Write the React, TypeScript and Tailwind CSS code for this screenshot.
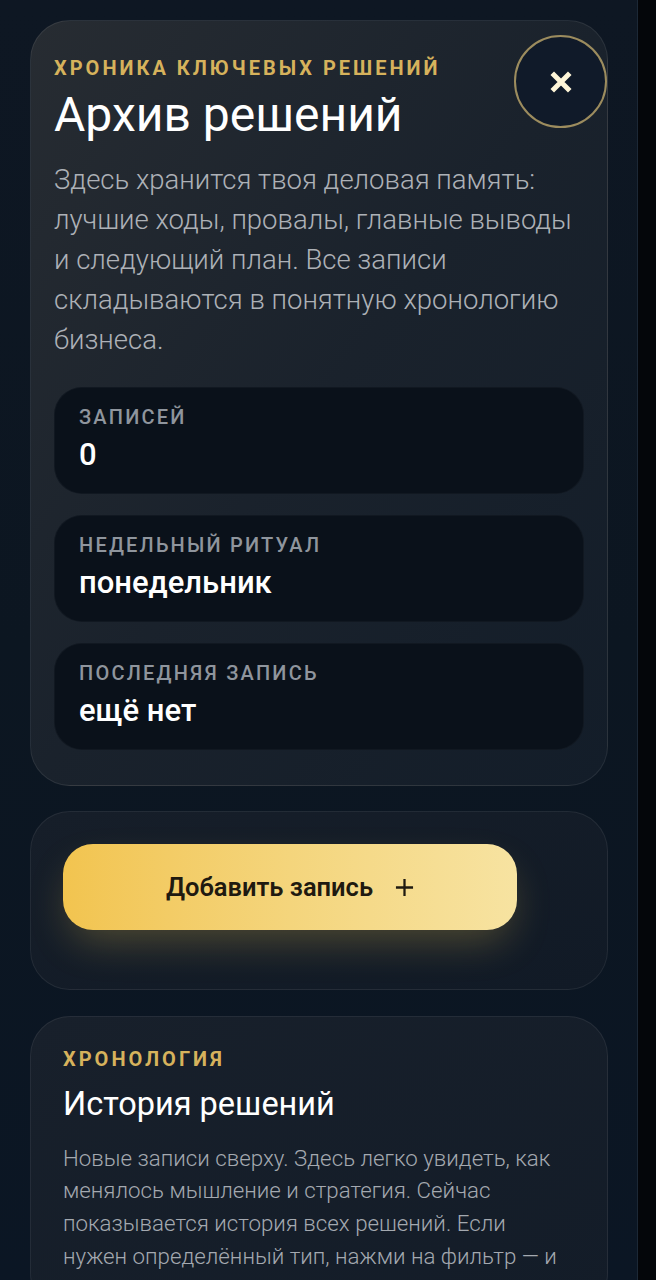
import React from "react";

function Stat({ label, value }: { label: string; value: string }) {
  return (
    <div className="rounded-[28px] bg-[#0a111a] border border-[#ffffff08] pl-[24px] pt-[17px] pb-[20px]">
      <div className="text-[20px] leading-[24px] font-medium tracking-[2.2px] text-[#8f959d]">{label}</div>
      <div className="mt-[8px] text-[31px] leading-[36px] font-medium text-white">{value}</div>
    </div>
  );
}

export default function App() {
  return (
    <div className="flex min-h-[1280px] w-[656px] bg-[#04060a]" style={{ fontFamily: "Roboto, 'Noto Sans', sans-serif" }}>
      <div className="w-[638px] shrink-0 border-r border-[#1c2836] bg-gradient-to-b from-[#0e1723] via-[#0c1621] to-[#0b1624] pl-[30px] pr-[29px] pt-[20px] flex flex-col overflow-hidden h-[1280px]">
        {/* Card 1 */}
        <div className="relative rounded-[40px] border border-[#ffffff14] bg-gradient-to-br from-[#272c32] via-[#1a222c] to-[#131d29] px-[23px] pt-[35px] pb-[35px]">
          <button className="absolute top-[14px] right-[0px] w-[93px] h-[93px] rounded-full border-[2.5px] border-[#9c8c5e] bg-[#101a29] flex items-center justify-center">
            <svg width="30" height="30" viewBox="0 0 24 24" fill="none" stroke="#fff6d8" strokeWidth="4" strokeLinecap="butt">
              <path d="M5 5 L19 19 M19 5 L5 19" />
            </svg>
          </button>
          <div className="text-[20px] leading-[24px] font-bold tracking-[3px] text-[#d6b25c]">ХРОНИКА КЛЮЧЕВЫХ РЕШЕНИЙ</div>
          <div className="mt-[7px] text-[48px] leading-[56px] font-normal text-white">Архив решений</div>
          <p className="mt-[17px] text-[27.5px] leading-[40px] font-light text-[#adb1b7]">
            Здесь хранится твоя деловая память: лучшие ходы, провалы, главные выводы и следующий план. Все записи складываются в понятную хронологию бизнеса.
          </p>
          <div className="mt-[27px] flex flex-col gap-[21px]">
            <Stat label="ЗАПИСЕЙ" value="0" />
            <Stat label="НЕДЕЛЬНЫЙ РИТУАЛ" value="понедельник" />
            <Stat label="ПОСЛЕДНЯЯ ЗАПИСЬ" value="ещё нет" />
          </div>
        </div>

        {/* Card 2 */}
        <div className="mt-[25px] rounded-[40px] border border-[#ffffff12] bg-gradient-to-br from-[#161e29] to-[#111a26] pl-[32px] pt-[32px] pb-[59px]">
          <button className="w-[454px] h-[86px] rounded-[30px] bg-gradient-to-r from-[#f2c44f] via-[#f4d57c] to-[#f7e3a1] shadow-[0_18px_40px_-8px_rgba(242,196,79,0.28)] flex items-center justify-center gap-[22px] text-[#1f1a10]">
            <span className="text-[25.5px] font-semibold">Добавить запись</span>
            <svg width="19" height="19" viewBox="0 0 20 20" stroke="#1f1a10" strokeWidth="2.4">
              <path d="M10 1 V19 M1 10 H19" />
            </svg>
          </button>
        </div>

        {/* Card 3 */}
        <div className="mt-[26px] rounded-[40px] border border-[#ffffff12] bg-gradient-to-br from-[#18202b] to-[#131c28] px-[32px] pt-[30px] pb-[40px]">
          <div className="text-[20px] leading-[24px] font-bold tracking-[3px] text-[#d6b25c]">ХРОНОЛОГИЯ</div>
          <div className="mt-[12.5px] text-[32.5px] leading-[40px] font-normal text-white">История решений</div>
          <p className="mt-[18px] text-[22.3px] leading-[32.7px] font-light text-[#a4a9b0]">
            Новые записи сверху. Здесь легко увидеть, как менялось мышление и стратегия. Сейчас показывается история всех решений. Если нужен определённый тип, нажми на фильтр — и
          </p>
        </div>
      </div>
      <div className="flex-1" />
    </div>
  );
}
